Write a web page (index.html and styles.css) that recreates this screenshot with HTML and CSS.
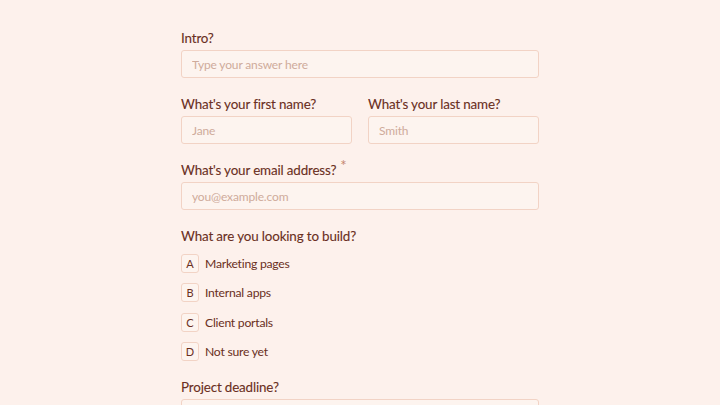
FILE: index.html
```html
<!DOCTYPE html>
<html lang="en">
<head>
<meta charset="utf-8">
<title>Form</title>
<link rel="stylesheet" href="styles.css">
</head>
<body>
<form class="form">
  <div class="field">
    <label class="label">Intro?</label>
    <input class="input" type="text" placeholder="Type your answer here">
  </div>
  <div class="row">
    <div class="field">
      <label class="label">What's your first name?</label>
      <input class="input" type="text" placeholder="Jane">
    </div>
    <div class="field">
      <label class="label">What's your last name?</label>
      <input class="input" type="text" placeholder="Smith">
    </div>
  </div>
  <div class="field">
    <label class="label">What's your email address?<span class="req">*</span></label>
    <input class="input" type="email" placeholder="you@example.com">
  </div>
  <div class="field">
    <div class="label">What are you looking to build?</div>
    <div class="choices">
      <div class="choice"><span class="key">A</span><span class="choice-text">Marketing pages</span></div>
      <div class="choice"><span class="key">B</span><span class="choice-text">Internal apps</span></div>
      <div class="choice"><span class="key">C</span><span class="choice-text">Client portals</span></div>
      <div class="choice"><span class="key">D</span><span class="choice-text">Not sure yet</span></div>
    </div>
  </div>
  <div class="field">
    <label class="label">Project deadline?</label>
    <input class="input" type="text" placeholder="">
  </div>
</form>
</body>
</html>
```
FILE: styles.css
```css
* { box-sizing: border-box; }
html, body {
  margin: 0;
  padding: 0;
  background: #fdf1ec;
  font-family: Lato, "Open Sans", sans-serif;
  overflow: hidden;
}
.form {
  width: 358px;
  margin: 0 auto;
  padding-top: 28px;
  display: flex;
  flex-direction: column;
  gap: 16px;
}
.row {
  display: grid;
  grid-template-columns: minmax(0, 1fr) minmax(0, 1fr);
  gap: 16px;
}
.field {
  display: flex;
  flex-direction: column;
  gap: 2px;
  min-width: 0;
}
.label {
  font-size: 13.4px;
  line-height: 20px;
  color: #6a2f22;
  letter-spacing: -0.15px;
  -webkit-text-stroke: 0.1px #6a2f22;
}
.req {
  color: #c4866e;
  font-size: 15px;
  line-height: 0;
  vertical-align: 4px;
  margin-left: 4px;
  -webkit-text-stroke: 0;
}
.input {
  width: 100%;
  min-width: 0;
  height: 28px;
  border: 1px solid #f2d3c5;
  border-radius: 3px;
  background: #fdf4ef;
  padding: 0 10px;
  font-family: inherit;
  font-size: 12px;
  letter-spacing: -0.15px;
  color: #6a2f22;
  outline: none;
}
.input::placeholder { color: #cfab9b; }
.choices {
  display: flex;
  flex-direction: column;
  gap: 11.5px;
  margin-top: 6px;
}
.choice {
  display: flex;
  align-items: center;
  gap: 6px;
  height: 18px;
}
.key {
  width: 18px;
  height: 19px;
  border: 1px solid #f2d3c5;
  border-radius: 3px;
  background: #fdf4ef;
  display: flex;
  align-items: center;
  justify-content: center;
  font-size: 11px;
  color: #6a2f22;
}
.choice-text {
  font-size: 12.2px;
  letter-spacing: -0.25px;
  color: #6a2f22;
}
```
